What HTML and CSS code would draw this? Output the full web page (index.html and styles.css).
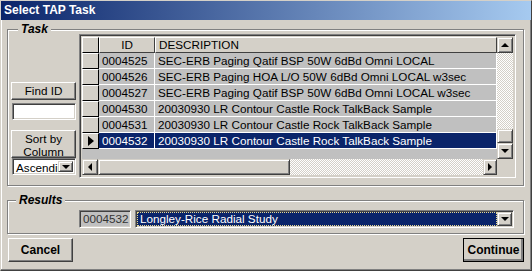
FILE: index.html
```html
<!DOCTYPE html>
<html lang="en">
<head>
  <meta charset="UTF-8">
  <title>Select TAP Task</title>
  <link rel="stylesheet" href="styles.css">
</head>
<body>

<div class="window">
  <div class="titlebar">Select TAP Task</div>
  <div class="client">

    <div class="group task-group">
      <span class="legend">Task</span>
      <div class="side">
        <div class="btn find-btn">Find ID</div>
        <div class="field find-field"></div>
        <div class="btn sort-btn">Sort by<br>Column</div>
        <div class="combo sort-combo">
          <span class="combo-text">Ascending</span>
          <span class="drop"><i class="tri down"></i></span>
        </div>
      </div>

      <div class="datagrid">
        <div class="grid-data">
          <div class="grid-row head">
            <div class="sel"></div>
            <div class="hcell center">ID</div>
            <div class="hcell">DESCRIPTION</div>
          </div>
          <div class="grid-row">
            <div class="sel"></div>
            <div class="cell">0004525</div>
            <div class="cell">SEC-ERB Paging Qatif BSP 50W 6dBd Omni LOCAL</div>
          </div>
          <div class="grid-row">
            <div class="sel"></div>
            <div class="cell">0004526</div>
            <div class="cell">SEC-ERB Paging HOA L/O 50W 6dBd Omni LOCAL w3sec</div>
          </div>
          <div class="grid-row">
            <div class="sel"></div>
            <div class="cell">0004527</div>
            <div class="cell">SEC-ERB Paging Qatif BSP 50W 6dBd Omni LOCAL w3sec</div>
          </div>
          <div class="grid-row">
            <div class="sel"></div>
            <div class="cell">0004530</div>
            <div class="cell">20030930 LR Contour Castle Rock TalkBack Sample</div>
          </div>
          <div class="grid-row">
            <div class="sel"></div>
            <div class="cell">0004531</div>
            <div class="cell">20030930 LR Contour Castle Rock TalkBack Sample</div>
          </div>
          <div class="grid-row current">
            <div class="sel"><i class="tri right"></i></div>
            <div class="cell">0004532</div>
            <div class="cell">20030930 LR Contour Castle Rock TalkBack Sample</div>
          </div>
        </div>

        <div class="vscroll">
          <span class="arrow"><i class="tri up"></i></span>
          <span class="track"></span>
          <span class="thumb"></span>
          <span class="arrow"><i class="tri down"></i></span>
        </div>

        <div class="hscroll">
          <span class="arrow"><i class="tri left"></i></span>
          <span class="thumb"></span>
          <span class="track"></span>
          <span class="arrow"><i class="tri right small"></i></span>
        </div>
        <div class="corner"></div>
      </div>
    </div>

    <div class="group results-group">
      <span class="legend">Results</span>
      <div class="field result-id">0004532</div>
      <div class="combo result-combo">
        <span class="combo-text"><span class="focus">Longley-Rice Radial Study</span></span>
        <span class="drop"><i class="tri down"></i></span>
      </div>
    </div>

    <div class="actions">
      <div class="btn action cancel">Cancel</div>
      <div class="btn action continue">Continue</div>
    </div>

  </div>
</div>

</body>
</html>
```

FILE: styles.css
```css
body {
  margin: 0;
  background: #d4d0c8;
  font-family: "Liberation Sans", Arial, sans-serif;
  font-size: 11.7px;
  color: #000;
}

.window {
  width: 532px;
  height: 271px;
  box-sizing: border-box;
  background: #d4d0c8;
  border: 1px solid;
  border-color: #d4d0c8 #404040 #404040 #d4d0c8;
  box-shadow: inset -1px -1px 0 #808080, inset 1px 1px 0 #fff;
  overflow: hidden;
}

.titlebar {
  height: 19px;
  line-height: 19px;
  padding-left: 3px;
  background: linear-gradient(to right, #0a246a, #a6caf0);
  color: #fff;
  font-weight: bold;
  font-size: 12px;
}

.client {
  padding: 9px 7px 0 6px;
}

/* etched group frame */
.group {
  position: relative;
  box-sizing: border-box;
  border: 1px solid #808080;
  box-shadow: 1px 1px 0 #fff, inset 1px 1px 0 #fff;
}

.legend {
  position: absolute;
  top: -7px;
  padding: 0 3px;
  background: #d4d0c8;
  font-weight: bold;
  font-style: italic;
  font-size: 12px;
  line-height: 13px;
}

.task-group {
  height: 157px;
  display: flex;
  gap: 3px;
  padding: 4px 6px 0 3px;
}

.task-group .legend {
  left: 10px;
}

/* 3d helpers */
.btn {
  box-sizing: border-box;
  background: #d4d0c8;
  border: 1px solid;
  border-color: #fff #404040 #404040 #fff;
  box-shadow: inset -1px -1px 0 #808080;
  text-align: center;
}

.field {
  box-sizing: border-box;
  background: #fff;
  border: 1px solid;
  border-color: #808080 #fff #fff #808080;
  box-shadow: inset 1px 1px 0 #404040, inset -1px -1px 0 #d4d0c8;
}

.side {
  width: 65px;
  height: 144px;
  display: flex;
  flex-direction: column;
  justify-content: flex-end;
  padding-bottom: 3px;
  box-sizing: border-box;
}

.find-btn {
  height: 18px;
  line-height: 16px;
}

.find-field {
  height: 17px;
  margin: 3px 0 10px 1px;
}

.sort-btn {
  height: 28px;
  line-height: 13px;
  padding-top: 1px;
}

.combo {
  box-sizing: border-box;
  display: flex;
  align-items: stretch;
  background: #fff;
  border: 1px solid;
  border-color: #808080 #fff #fff #808080;
  box-shadow: inset 1px 1px 0 #404040, inset -1px -1px 0 #d4d0c8;
  padding: 2px;
}

.sort-combo {
  height: 17px;
  margin-left: 1px;
}

.combo-text {
  flex: 1;
  overflow: hidden;
  white-space: nowrap;
  line-height: 13px;
  padding-left: 1px;
}

.drop {
  width: 15px;
  box-sizing: border-box;
  display: flex;
  align-items: center;
  justify-content: center;
  background: #d4d0c8;
  border: 1px solid;
  border-color: #d4d0c8 #404040 #404040 #d4d0c8;
  box-shadow: inset 1px 1px 0 #fff, inset -1px -1px 0 #808080;
}

/* triangles */
.tri {
  display: block;
  width: 0;
  height: 0;
  border: solid transparent;
}

.tri.down {
  border-width: 4px 4px 0 4px;
  border-top-color: #000;
}

.tri.up {
  border-width: 0 4px 4px 4px;
  border-bottom-color: #000;
}

.tri.left {
  border-width: 4px 4px 4px 0;
  border-right-color: #000;
}

.tri.right {
  border-width: 5px 0 5px 6px;
  border-left-color: #000;
}

.tri.right.small {
  border-width: 4px 0 4px 4px;
}

/* data grid */
.datagrid {
  width: 437px;
  height: 144px;
  box-sizing: border-box;
  border: 1px solid;
  border-color: #808080 #fff #fff #808080;
  box-shadow: inset 1px 1px 0 #404040, inset -1px -1px 0 #d4d0c8;
  padding: 2px;
  display: grid;
  grid-template-columns: 1fr 16px;
  grid-template-rows: 1fr 16px;
}

.grid-data {
  background: #c0c0c0;
  overflow: hidden;
}

.grid-row {
  display: grid;
  grid-template-columns: 17px 56px 1fr;
  height: 16px;
}

.sel {
  box-sizing: border-box;
  background: #d4d0c8;
  border: 1px solid;
  border-color: #fff #000 #000 #fff;
  display: flex;
  align-items: center;
  justify-content: center;
}

.hcell {
  box-sizing: border-box;
  background: #d4d0c8;
  border: 1px solid;
  border-color: #fff #404040 #404040 #fff;
  padding-left: 3px;
  line-height: 14px;
  white-space: nowrap;
}

.hcell.center {
  text-align: center;
  padding-left: 0;
}

.cell {
  box-sizing: border-box;
  border-bottom: 1px solid #fff;
  border-right: 1px solid #fff;
  padding-left: 3px;
  line-height: 15px;
  white-space: nowrap;
  overflow: hidden;
}

.current .cell {
  background: #0a246a;
  color: #fff;
}

.vscroll,
.hscroll {
  display: flex;
  background: repeating-conic-gradient(#fff 0 25%, #d4d0c8 0 50%) 0 0 / 2px 2px;
}

.vscroll {
  flex-direction: column;
}

.vscroll .track,
.hscroll .track {
  flex: 1;
}

.arrow,
.thumb {
  box-sizing: border-box;
  background: #d4d0c8;
  border: 1px solid;
  border-color: #d4d0c8 #404040 #404040 #d4d0c8;
  box-shadow: inset 1px 1px 0 #fff, inset -1px -1px 0 #808080;
}

.arrow {
  width: 16px;
  height: 16px;
  display: flex;
  align-items: center;
  justify-content: center;
}

.vscroll .thumb {
  height: 14px;
}

.hscroll .thumb {
  width: 192px;
}

.hscroll .arrow:last-child {
  width: 14px;
}

.corner {
  background: #d4d0c8;
}

/* results */
.results-group {
  margin-top: 14px;
  height: 34px;
  display: flex;
  gap: 4px;
  padding: 9px 9px 0 71px;
}

.results-group .legend {
  left: 8px;
}

.result-id {
  width: 52px;
  height: 18px;
  background: #c0c0c0;
  color: #333;
  line-height: 16px;
  padding-left: 3px;
}

.result-combo {
  flex: 1;
  height: 18px;
  padding: 1px;
}

.result-combo .combo-text {
  background: #0a246a;
  color: #fff;
  padding: 0;
  display: flex;
}

.focus {
  flex: 1;
  border: 1px dotted #e8d890;
  line-height: 12px;
  padding-left: 2px;
}

/* buttons */
.actions {
  display: flex;
  justify-content: space-between;
  margin-top: 4px;
}

.action {
  height: 24px;
  line-height: 22px;
  font-weight: bold;
  font-size: 12px;
}

.cancel {
  width: 65px;
  margin-left: 1px;
}

.continue {
  width: 61px;
  outline: 1px solid #000;
  outline-offset: -1px;
  border-color: #fff #000 #000 #fff;
  box-shadow: inset -1px -1px 0 #808080, inset -2px -2px 0 #808080;
}
```
